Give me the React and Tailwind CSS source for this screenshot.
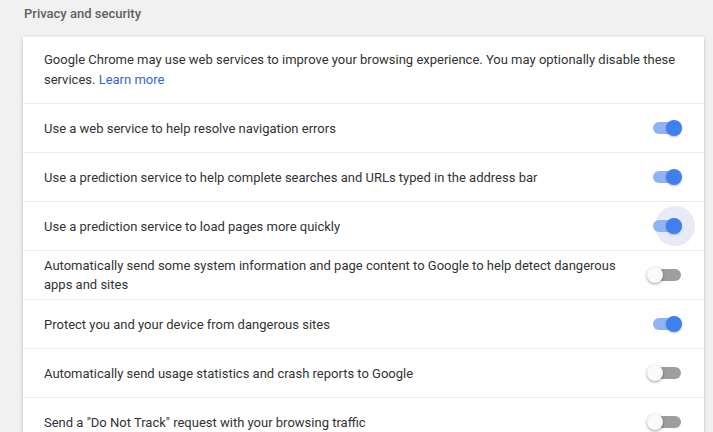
import React, { useState } from 'react';

const rows = [
  { text: 'Use a web service to help resolve navigation errors', on: true },
  { text: 'Use a prediction service to help complete searches and URLs typed in the address bar', on: true },
  { text: 'Use a prediction service to load pages more quickly', on: true, focus: true },
  {
    text: 'Automatically send some system information and page content to Google to help detect dangerous apps and sites',
    on: false,
  },
  { text: 'Protect you and your device from dangerous sites', on: true },
  { text: 'Automatically send usage statistics and crash reports to Google', on: false },
  { text: 'Send a "Do Not Track" request with your browsing traffic', on: false },
];

// knob sits on the track's ends via flex; track + focus ripple lie behind it
const Toggle = ({ on, focus, onClick }) => (
  <button
    onClick={onClick}
    className={`relative flex items-center w-[36px] h-4 shrink-0 ${on ? 'justify-end' : 'justify-start'}`}
  >
    {focus && (
      <span className="absolute w-[40px] h-[40px] rounded-full bg-[#e8eaf6] -right-[12px] -top-[12px]" />
    )}
    <span
      className={`absolute left-[6px] right-[2px] h-[12px] rounded-full ${
        on ? 'bg-[#8fb3f5]' : 'bg-[#9e9e9e]'
      }`}
    />
    <span
      className={`relative w-4 h-4 rounded-full ${
        on
          ? 'mr-[1px] bg-[#3f7fee] shadow-[0_1px_2px_rgba(0,0,0,0.25)]'
          : 'bg-[#fafafa] shadow-[0_1px_3px_rgba(0,0,0,0.4)]'
      }`}
    />
  </button>
);

export default function App() {
  const [state, setState] = useState(rows.map((r) => r.on));

  return (
    <div className="min-h-screen bg-[#f1f1f1] font-['Roboto',sans-serif] text-[13px] pb-6">
      <h2 className="pl-6 pt-1 mb-[13px] leading-5 font-medium text-[#616161]">
        Privacy and security
      </h2>

      <div className="ml-[23px] w-[681px] bg-white shadow-[0_2px_2px_0_rgba(0,0,0,0.14),0_1px_5px_0_rgba(0,0,0,0.12),0_3px_1px_-2px_rgba(0,0,0,0.2)]">
        <p className="pl-[21px] pr-5 pt-[13px] pb-[13px] leading-5 text-[#333]">
          Google Chrome may use web services to improve your browsing experience. You may optionally
          disable these services. <a className="text-[#3367d6]">Learn more</a>
        </p>

        {rows.map((row, i) => (
          <div
            key={i}
            className="flex items-center gap-4 min-h-[49px] border-t border-[#ececec] pl-[21px] pr-[21px]"
          >
            <div className="flex-1 py-[5px] leading-[19px] text-[#333]">{row.text}</div>
            <Toggle
              on={state[i]}
              focus={row.focus}
              onClick={() => setState((s) => s.map((v, j) => (j === i ? !v : v)))}
            />
          </div>
        ))}
      </div>
    </div>
  );
}
